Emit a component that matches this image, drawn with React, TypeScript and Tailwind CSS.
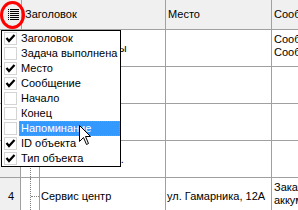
import type { ReactNode } from 'react';

interface Row {
  num: string;
  title: string;
  place: string;
  message: string[];
}

interface MenuItem {
  label: string;
  checked: boolean;
  active?: boolean;
}

const rows: Row[] = [
  { num: '0', title: 'Купить продукты', place: '', message: ['Сообщение 1', 'Сообщение 2'] },
  { num: '1', title: '', place: '', message: [] },
  { num: '2', title: '', place: '', message: [] },
  { num: '3', title: 'Оплатить счета.', place: '', message: [] },
  { num: '4', title: 'Сервис центр', place: 'ул. Гамарника, 12А', message: ['Заказать', 'аккумулятор'] },
];

const menuItems: MenuItem[] = [
  { label: 'Заголовок', checked: true },
  { label: 'Задача выполнена', checked: false },
  { label: 'Место', checked: true },
  { label: 'Сообщение', checked: true },
  { label: 'Начало', checked: false },
  { label: 'Конец', checked: false },
  { label: 'Напоминание', checked: false, active: true },
  { label: 'ID объекта', checked: true },
  { label: 'Тип объекта', checked: true },
];

function HeaderCell({ children, className }: Readonly<{ children?: ReactNode; className: string }>) {
  return (
    <div className={`flex h-full shrink-0 items-center overflow-hidden whitespace-nowrap border-r border-[#a0a0a0] ${className}`}>
      {children}
    </div>
  );
}

function ColumnIcon() {
  return (
    <svg width="12" height="12" viewBox="0 0 12 12" className="absolute left-[8px] top-[9px]">
      {[0, 2, 4, 6, 8, 10].map((y) => (
        <g key={y} fill="#000">
          <rect x="0" y={y} width="1" height="1" />
          <rect x="2" y={y} width="9" height="1" />
        </g>
      ))}
    </svg>
  );
}

function CheckBox({ checked }: Readonly<{ checked: boolean }>) {
  return (
    <div className="relative ml-[2px] h-[13px] w-[13px] shrink-0 border border-[#d4d4d4] bg-white">
      {checked && (
        <svg width="13" height="13" viewBox="0 0 13 13" className="absolute -left-px -top-px">
          <polyline points="2.5,6 5,9 10.5,3" fill="none" stroke="#000" strokeWidth="2.2" />
        </svg>
      )}
    </div>
  );
}

function ColumnMenu() {
  return (
    <div className="absolute left-[1px] top-[30px] h-[137px] w-[120px] border border-black bg-white">
      {menuItems.map((item) => (
        <div key={item.label} className="flex h-[15px] items-center">
          <CheckBox checked={item.checked} />
          <div
            className={
              item.active
                ? 'ml-[2px] flex h-full flex-1 items-center border border-dotted border-[#c98a3a] bg-[#3399ff] pl-[1px] text-white'
                : 'ml-[2px] flex h-full flex-1 items-center pl-[2px]'
            }
          >
            {item.label}
          </div>
        </div>
      ))}
    </div>
  );
}

function Cursor() {
  return (
    <svg width="13" height="21" viewBox="0 0 13 21" className="absolute left-[79px] top-[125px]">
      <path
        d="M0.5 0.5 V16.5 L4.5 12.5 L7.5 19.5 L9.5 18.5 L6.5 11.5 H11.5 Z"
        fill="#fff"
        stroke="#000"
        strokeWidth="1"
        strokeLinejoin="miter"
      />
    </svg>
  );
}

function GridRow({ row }: Readonly<{ row: Row }>) {
  return (
    <div className="flex h-[37px] border-b border-[#a0a0a0]">
      <div className="flex w-[21px] shrink-0 items-center justify-center border-r border-[#a0a0a0] bg-[#f0f0f0] pl-[2px]">
        {row.num}
      </div>
      <div className="relative w-[19px] shrink-0 border-r border-[#a0a0a0]">
        <div className="absolute bottom-0 left-[9px] top-0 border-l border-dotted border-[#808080]" />
        <div className="absolute left-[10px] right-0 top-[18px] border-t border-dotted border-[#808080]" />
      </div>
      <div className="flex w-[126px] shrink-0 items-center overflow-hidden whitespace-nowrap border-r border-[#a0a0a0] pl-[1px]">
        {row.title}
      </div>
      <div className="flex w-[106px] shrink-0 items-center overflow-hidden whitespace-nowrap border-r border-[#a0a0a0] pl-[1px]">
        {row.place}
      </div>
      <div className="flex flex-1 flex-col justify-center overflow-hidden whitespace-nowrap pb-[4px] pl-[2px] leading-[13px]">
        {row.message.map((line) => (
          <div key={line}>{line}</div>
        ))}
      </div>
    </div>
  );
}

export default function App() {
  return (
    <div className="relative h-[210px] w-[298px] overflow-hidden bg-white font-['Liberation_Sans',Arial,sans-serif] text-[11px] text-black">
      {/* Header */}
      <div className="flex h-[30px] border-b border-[#a0a0a0] bg-[#f0f0f0]">
        <HeaderCell className="relative w-[22px]">
          <ColumnIcon />
        </HeaderCell>
        <HeaderCell className="w-[144px] pl-[3px]">Заголовок</HeaderCell>
        <HeaderCell className="w-[106px] pl-[2px]">Место</HeaderCell>
        <div className="flex h-full flex-1 items-center overflow-hidden whitespace-nowrap pl-[2px]">Сообщение</div>
      </div>

      {/* Rows */}
      {rows.map((row) => (
        <GridRow key={row.num} row={row} />
      ))}

      <ColumnMenu />
      <Cursor />

      {/* Red highlight ring */}
      <svg width="26" height="30" viewBox="0 0 26 30" className="absolute left-0 top-0">
        <ellipse cx="12.5" cy="15" rx="11" ry="12.5" fill="none" stroke="#ff0000" strokeWidth="3" />
      </svg>
    </div>
  );
}
